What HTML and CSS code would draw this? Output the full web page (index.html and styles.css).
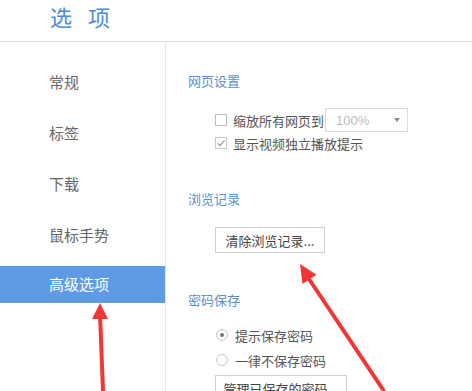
FILE: index.html
```html
<!DOCTYPE html>
<html lang="zh-CN">
<head>
    <meta charset="UTF-8">
    <meta name="viewport" content="width=device-width, initial-scale=1.0">
    <title>选项</title>
    <link rel="stylesheet" href="styles.css">
</head>
<body>
    <div class="page">
        <div class="header">
            <h1 class="title"><span>选</span><span>项</span></h1>
        </div>

        <div class="main">
            <ul class="sidebar">
                <li class="nav-item">常规</li>
                <li class="nav-item">标签</li>
                <li class="nav-item">下载</li>
                <li class="nav-item">鼠标手势</li>
                <li class="nav-item active">高级选项</li>
            </ul>

            <div class="content">
                <div class="section">
                    <h2 class="section-title">网页设置</h2>
                    <div class="option zoom-row">
                        <span class="checkbox"></span>
                        <span class="label">缩放所有网页到</span>
                        <div class="select">
                            <span>100%</span>
                            <span class="caret"></span>
                        </div>
                    </div>
                    <div class="option">
                        <span class="checkbox checked">
                            <svg width="10" height="10" viewBox="0 0 10 10"><path d="M1.5 5.2 L4 7.6 L8.6 2.4" fill="none" stroke="#9a9a9a" stroke-width="1.2"/></svg>
                        </span>
                        <span class="label">显示视频独立播放提示</span>
                    </div>
                </div>

                <div class="section">
                    <h2 class="section-title">浏览记录</h2>
                    <button class="btn">清除浏览记录...</button>
                </div>

                <div class="section">
                    <h2 class="section-title">密码保存</h2>
                    <div class="option radio-row">
                        <span class="radio checked"></span>
                        <span class="label">提示保存密码</span>
                    </div>
                    <div class="option radio-row">
                        <span class="radio"></span>
                        <span class="label">一律不保存密码</span>
                    </div>
                    <button class="btn wide">管理已保存的密码...</button>
                </div>
            </div>
        </div>

        <!-- annotation arrows drawn over the screenshot -->
        <svg class="arrows" width="472" height="391" viewBox="0 0 472 391">
            <line x1="100" y1="314" x2="103" y2="391" stroke="#f23535" stroke-width="4"/>
            <polygon points="100,303 92,319 108,319" fill="#f23535"/>
            <line x1="307" y1="276" x2="384" y2="391" stroke="#f23535" stroke-width="4"/>
            <polygon points="300,264 302.5,284 316.5,274.8" fill="#f23535"/>
        </svg>
    </div>
</body>
</html>
```

FILE: styles.css
```css
* {
    margin: 0;
    padding: 0;
    box-sizing: border-box;
}

body {
    font-family: "Noto Sans CJK SC", "Noto Sans", sans-serif;
    background: #fff;
    width: 472px;
    height: 391px;
    overflow: hidden;
}

.page {
    position: relative;
    height: 391px;
    display: flex;
    flex-direction: column;
}

.header {
    flex-shrink: 0;
    height: 42px;
    padding-left: 50px;
    border-bottom: 1px solid #dedede;
}

.title {
    display: flex;
    gap: 16px;
    font-size: 22px;
    font-weight: 400;
    line-height: 32px;
    color: #4d8ad9;
}

.main {
    flex: 1;
    display: flex;
    min-height: 0;
}

.sidebar {
    list-style: none;
    width: 166px;
    border-right: 1px solid #e6e6e6;
    padding-top: 22px;
    display: flex;
    flex-direction: column;
    gap: 15px;
}

.nav-item {
    height: 36px;
    line-height: 36px;
    padding-left: 49px;
    font-size: 15px;
    color: #666;
}

.nav-item.active {
    height: 37px;
    margin-top: -2px;
    background: #5f9be5;
    color: #fff;
}

.content {
    flex: 1;
    padding: 29px 0 0 22px;
}

.section-title {
    font-size: 13px;
    font-weight: 400;
    line-height: 20px;
    color: #5b8fd2;
}

.section + .section {
    margin-top: 36px;
}

.section:last-child {
    margin-top: 37px;
}

.option {
    display: flex;
    align-items: center;
    height: 20px;
    padding-left: 27px;
    font-size: 13px;
    color: #555;
}

.zoom-row {
    height: 24px;
    margin-top: 17px;
    margin-bottom: 1px;
}

.checkbox {
    width: 12px;
    height: 12px;
    border: 1px solid #bdbdbd;
    background: #fff;
    display: flex;
    align-items: center;
    justify-content: center;
    margin-right: 6px;
}

.checkbox.checked {
    border-color: #c8c8c8;
}

.select {
    margin-left: 1px;
    width: 83px;
    height: 24px;
    border: 1px solid #dcdcdc;
    display: flex;
    align-items: center;
    justify-content: space-between;
    padding: 0 7px 0 10px;
    color: #bcbcbc;
    font-family: "Liberation Sans", sans-serif;
    font-size: 13px;
}

.caret {
    width: 0;
    height: 0;
    border-left: 3px solid transparent;
    border-right: 3px solid transparent;
    border-top: 4px solid #888;
}

.btn {
    display: block;
    margin: 18px 0 0 27px;
    width: 110px;
    height: 26px;
    border: 1px solid #cfcfcf;
    background: #fff;
    font-family: inherit;
    font-size: 13px;
    color: #444;
}

.btn.wide {
    margin-top: 5px;
    width: 132px;
}

.radio-row {
    margin-top: 5px;
    padding-left: 28px;
}

.section-title + .radio-row {
    margin-top: 15px;
}

.radio {
    width: 12px;
    height: 12px;
    border: 1px solid #c4c4c4;
    border-radius: 50%;
    display: flex;
    align-items: center;
    justify-content: center;
    margin-right: 7px;
}

.radio.checked::after {
    content: '';
    width: 4px;
    height: 4px;
    border-radius: 50%;
    background: #777;
}

.arrows {
    position: absolute;
    top: 0;
    left: 0;
    pointer-events: none;
}
```
